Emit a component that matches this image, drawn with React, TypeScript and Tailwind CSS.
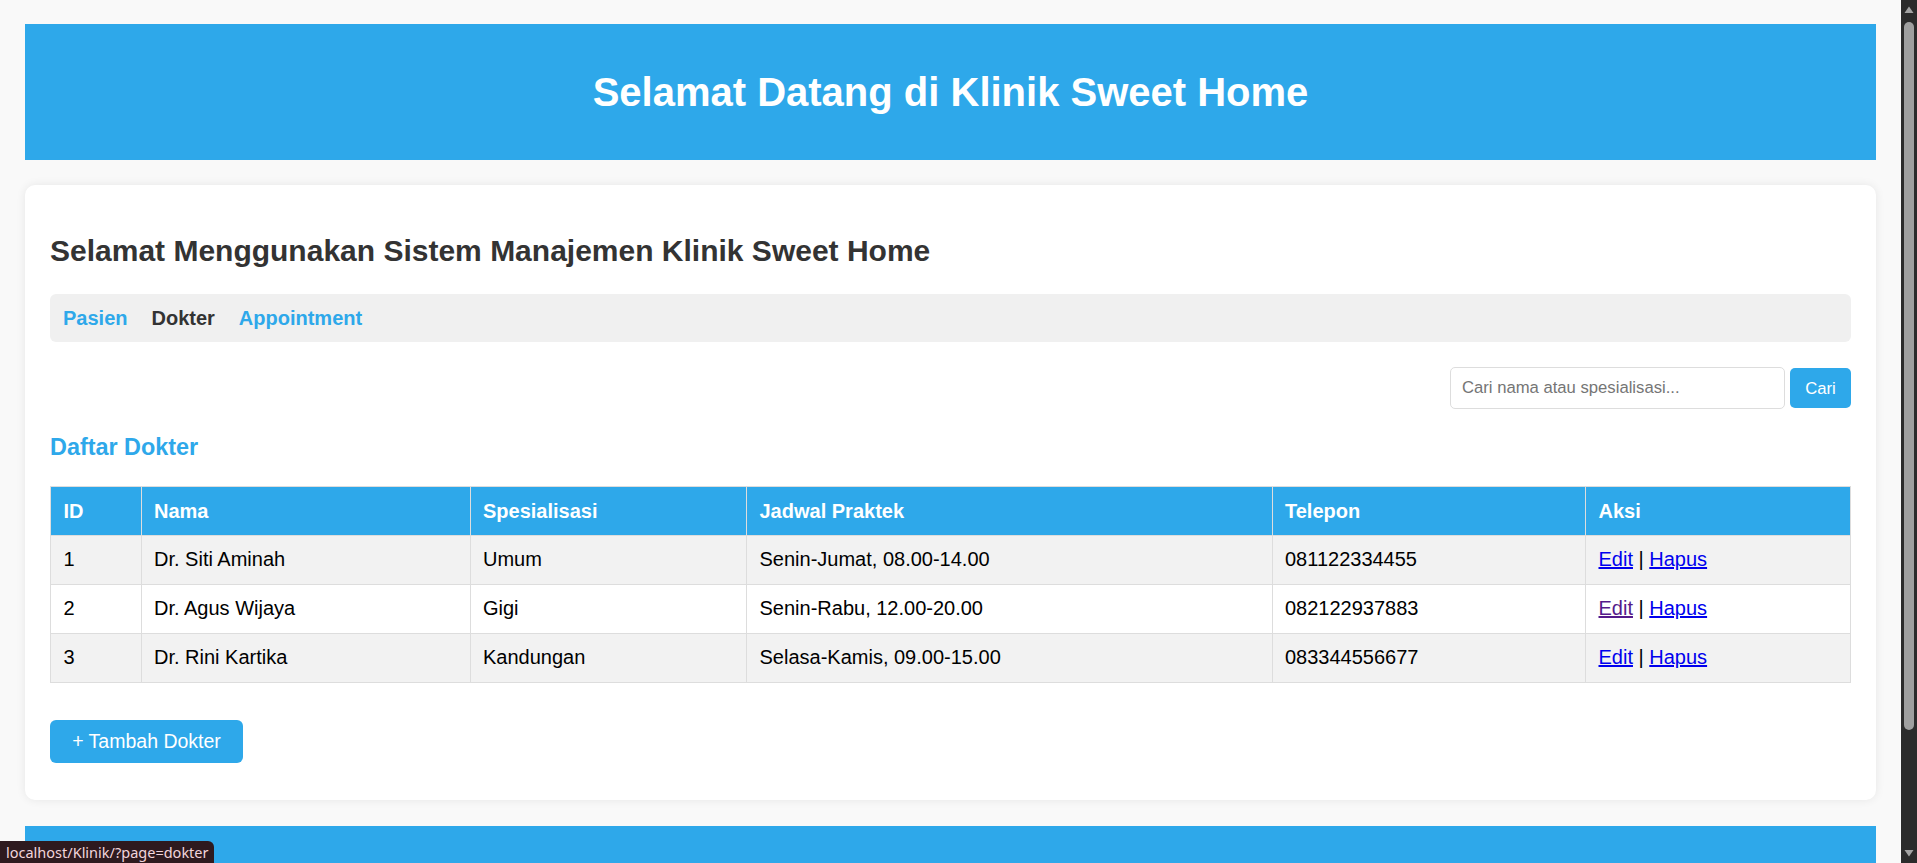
import React from 'react';

interface Dokter {
    id: number;
    nama: string;
    spesialisasi: string;
    jadwal: string;
    telepon: string;
    visited?: boolean;
}

const dokterList: Dokter[] = [
    { id: 1, nama: 'Dr. Siti Aminah', spesialisasi: 'Umum', jadwal: 'Senin-Jumat, 08.00-14.00', telepon: '081122334455' },
    { id: 2, nama: 'Dr. Agus Wijaya', spesialisasi: 'Gigi', jadwal: 'Senin-Rabu, 12.00-20.00', telepon: '082122937883', visited: true },
    { id: 3, nama: 'Dr. Rini Kartika', spesialisasi: 'Kandungan', jadwal: 'Selasa-Kamis, 09.00-15.00', telepon: '083344556677' },
];

const Scrollbar: React.FC = () => (
    <div className="w-[16px] h-full bg-[#2b2b2b] flex flex-col items-center">
        <svg width="16" height="18" viewBox="0 0 16 18" className="shrink-0">
            <path d="M3.5 13 L8 6.5 L12.5 13 Z" fill="#a3a3a3" />
        </svg>
        <div className="w-[10px] h-[708px] mt-[4px] rounded-full bg-[#9f9f9f]" />
        <div className="flex-1" />
        <svg width="16" height="18" viewBox="0 0 16 18" className="shrink-0">
            <path d="M3.5 5 L8 11.5 L12.5 5 Z" fill="#a3a3a3" />
        </svg>
    </div>
);

export default function App() {
    return (
        <div className="relative flex h-[863px] w-full overflow-hidden bg-[#f9f9f9] font-['Liberation_Sans',Arial,sans-serif]">
            <div className="flex-1 px-[25px] pt-[24px]">
                {/* header */}
                <div className="h-[136px] bg-[#2ea8ea] flex items-center justify-center">
                    <h1 className="text-white font-bold text-[40px] leading-[46px]">Selamat Datang di Klinik Sweet Home</h1>
                </div>

                {/* main card */}
                <div className="mt-[25px] bg-white rounded-[10px] shadow-[0_0_10px_rgba(0,0,0,0.08)] px-[25px] pt-[25px] pb-[37px]">
                    <h2 className="mt-[24px] mb-[26px] text-[30px] leading-[34px] font-bold text-[#333]">
                        Selamat Menggunakan Sistem Manajemen Klinik Sweet Home
                    </h2>

                    <nav className="h-[48px] flex items-center gap-[24px] px-[13px] rounded-[6px] bg-[#f0f0f0] text-[20px] leading-[23px] font-bold">
                        <a className="text-[#2ea8ea]">Pasien</a>
                        <a className="text-[#333]">Dokter</a>
                        <a className="text-[#2ea8ea]">Appointment</a>
                    </nav>

                    <div className="mt-[25px] flex justify-end items-center gap-[5px]">
                        <input
                            type="text"
                            placeholder="Cari nama atau spesialisasi..."
                            className="w-[335px] h-[42px] px-[11px] border border-[#dddddd] rounded-[5px] text-[16.67px] text-black placeholder:text-[#757575] outline-none"
                        />
                        <button className="w-[61px] h-[40px] rounded-[5px] bg-[#2ea8ea] text-white text-[16.67px]">Cari</button>
                    </div>

                    <h3 className="mt-[25px] text-[23.4px] leading-[27px] font-bold text-[#2ea8ea]">Daftar Dokter</h3>

                    <table className="mt-[25px] w-full border-collapse table-fixed text-[20px] leading-[23px]">
                        <colgroup>
                            <col className="w-[90.5px]" />
                            <col className="w-[329px]" />
                            <col className="w-[276.5px]" />
                            <col className="w-[525.5px]" />
                            <col className="w-[313.5px]" />
                            <col className="w-[265px]" />
                        </colgroup>
                        <thead>
                            <tr className="h-[49px] bg-[#2ea8ea] text-white">
                                {['ID', 'Nama', 'Spesialisasi', 'Jadwal Praktek', 'Telepon', 'Aksi'].map((h) => (
                                    <th key={h} className="border border-[#dddddd] px-[12.5px] text-left font-bold">{h}</th>
                                ))}
                            </tr>
                        </thead>
                        <tbody>
                            {dokterList.map((d, i) => (
                                <tr key={d.id} className={`h-[49px] text-black ${i % 2 === 0 ? 'bg-[#f2f2f2]' : 'bg-white'}`}>
                                    <td className="border border-[#dddddd] px-[12.5px] pb-[1px]">{d.id}</td>
                                    <td className="border border-[#dddddd] px-[12.5px] pb-[1px]">{d.nama}</td>
                                    <td className="border border-[#dddddd] px-[12.5px] pb-[1px]">{d.spesialisasi}</td>
                                    <td className="border border-[#dddddd] px-[12.5px] pb-[1px]">{d.jadwal}</td>
                                    <td className="border border-[#dddddd] px-[12.5px] pb-[1px]">{d.telepon}</td>
                                    <td className="border border-[#dddddd] px-[12.5px] pb-[1px]">
                                        <a className={`underline ${d.visited ? 'text-[#551a8b]' : 'text-[#0000ee]'}`}>Edit</a>
                                        {' | '}
                                        <a className="underline text-[#0000ee]">Hapus</a>
                                    </td>
                                </tr>
                            ))}
                        </tbody>
                    </table>

                    <button className="mt-[37px] h-[43px] w-[193px] rounded-[6px] bg-[#2ea8ea] text-white text-[19.5px]">
                        + Tambah Dokter
                    </button>
                </div>

                {/* footer */}
                <div className="mt-[26px] h-[60px] bg-[#2ea8ea]" />
            </div>

            <Scrollbar />

            {/* browser status bar */}
            <div className="absolute left-0 bottom-0 h-[22px] w-[214px] pl-[6px] rounded-tr-[6px] bg-[#2e1a1f] text-[#f2d5dc] text-[14.5px] leading-[22px] whitespace-nowrap font-['Noto_Sans',sans-serif]">
                localhost/Klinik/?page=dokter
            </div>
        </div>
    );
}
